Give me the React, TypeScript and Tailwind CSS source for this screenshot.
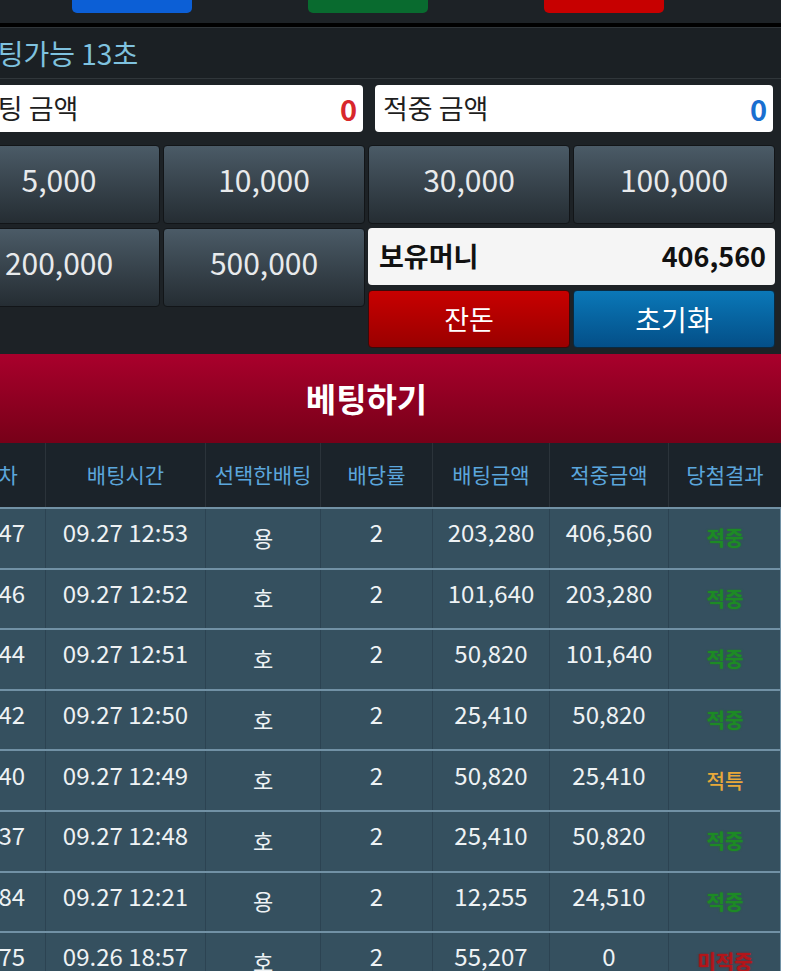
const font = { fontFamily: '"Noto Sans CJK KR", "Noto Sans", sans-serif' };

interface BetRow {
  round: string;
  time: string;
  pick: string;
  odds: string;
  bet: string;
  win: string;
  result: "win" | "tie" | "lose";
}

const rows: BetRow[] = [
  { round: "3847", time: "09.27 12:53", pick: "용", odds: "2", bet: "203,280", win: "406,560", result: "win" },
  { round: "3846", time: "09.27 12:52", pick: "호", odds: "2", bet: "101,640", win: "203,280", result: "win" },
  { round: "3844", time: "09.27 12:51", pick: "호", odds: "2", bet: "50,820", win: "101,640", result: "win" },
  { round: "3842", time: "09.27 12:50", pick: "호", odds: "2", bet: "25,410", win: "50,820", result: "win" },
  { round: "3840", time: "09.27 12:49", pick: "호", odds: "2", bet: "50,820", win: "25,410", result: "tie" },
  { round: "3837", time: "09.27 12:48", pick: "호", odds: "2", bet: "25,410", win: "50,820", result: "win" },
  { round: "3784", time: "09.27 12:21", pick: "용", odds: "2", bet: "12,255", win: "24,510", result: "win" },
  { round: "3675", time: "09.26 18:57", pick: "호", odds: "2", bet: "55,207", win: "0", result: "lose" },
];

const headers = ["회차", "배팅시간", "선택한배팅", "배당률", "배팅금액", "적중금액", "당첨결과"];

const cols = "grid grid-cols-[93px_160px_115px_112px_117px_119px_113px]";

function ResultText({ result }: { result: BetRow["result"] }) {
  if (result === "win")
    return <span className="text-[20px] font-bold text-[#1d8a25] [text-shadow:0_0_2px_#1d7a25]">적중</span>;
  if (result === "tie")
    return <span className="text-[20px] font-medium text-[#e8a83a]">적특</span>;
  return <span className="text-[20px] font-bold text-[#b3151a] [text-shadow:0_0_2px_#a01015]">미적중</span>;
}

function MoneyButton({ label }: { label: string }) {
  return (
    <button className="h-[79px] pb-[10px] rounded-[4px] border border-[#121518] bg-gradient-to-b from-[#4b5b67] to-[#252d33] text-[30px] text-[#e8eaec]">
      {label}
    </button>
  );
}

export default function App() {
  return (
    <div className="min-h-screen bg-white overflow-hidden" style={font}>
      <div className="w-[829px] ml-[-48px] bg-[#1d2226]">
        {/* top game buttons (cut off) */}
        <div className="h-[23px] flex items-start pl-[120px] gap-[116px]">
          <div className="w-[120px] h-[13px] rounded-b-[5px] bg-[#0c5fd6]" />
          <div className="w-[120px] h-[13px] rounded-b-[5px] bg-[#096b2f]" />
          <div className="w-[120px] h-[13px] rounded-b-[5px] bg-[#c70000]" />
        </div>
        <div className="h-[4px] bg-black" />

        {/* timer */}
        <div className="h-[52px] border-y border-[#30363a] bg-[#1b2024] flex items-center pl-[20px] text-[28px] text-[#7fc2df]">
          베팅가능 13초
        </div>

        {/* panel */}
        <div className="pt-[6px] pb-[6px]">
          <div className="grid grid-cols-2 gap-x-[12px] pl-[13px] pr-[8px]">
            <div className="h-[47px] rounded-[4px] bg-white flex items-center justify-between pl-[8px] pr-[6px]">
              <span className="text-[27px] text-[#1e1e1e]">베팅 금액</span>
              <span className="text-[29px] font-bold text-[#d8272c]">0</span>
            </div>
            <div className="h-[47px] rounded-[4px] bg-white flex items-center justify-between pl-[8px] pr-[6px]">
              <span className="text-[27px] text-[#1e1e1e]">적중 금액</span>
              <span className="text-[29px] font-bold text-[#1a6fd0]">0</span>
            </div>
          </div>

          <div className="mt-[13px] pl-[6px] grid grid-cols-[202px_202px_202px_202px] gap-x-[3px] gap-y-[4px] items-start">
            <MoneyButton label="5,000" />
            <MoneyButton label="10,000" />
            <MoneyButton label="30,000" />
            <MoneyButton label="100,000" />
            <MoneyButton label="200,000" />
            <MoneyButton label="500,000" />
            <div className="col-span-2 flex flex-col gap-[5px]">
              <div className="h-[57px] rounded-[4px] bg-[#f5f5f5] flex items-center justify-between pl-[11px] pr-[9px] text-[#111]">
                <span className="text-[27px] font-bold">보유머니</span>
                <span className="text-[27px] font-bold">406,560</span>
              </div>
              <div className="grid grid-cols-2 gap-x-[3px]">
                <button className="h-[58px] rounded-[4px] border border-[#3a0a0a] bg-gradient-to-b from-[#c80000] to-[#9a0000] text-[27px] text-white">
                  잔돈
                </button>
                <button className="h-[58px] rounded-[4px] border border-[#0a2a40] bg-gradient-to-b from-[#0b78b8] to-[#044f88] text-[28px] text-white">
                  초기화
                </button>
              </div>
            </div>
          </div>
        </div>

        {/* bet button */}
        <button className="w-full h-[89px] bg-gradient-to-b from-[#a9002c] to-[#770018] text-[33px] font-bold text-white">
          베팅하기
        </button>

        {/* history table */}
        <div className={`${cols} h-[64px] bg-[#1b232a]`}>
          {headers.map((h, i) => (
            <div
              key={h}
              className={`flex items-center justify-center text-[21px] text-[#5ba6dc] ${i > 0 ? "border-l border-[#2b333a]" : ""}`}
            >
              {h}
            </div>
          ))}
        </div>
        {rows.map((r) => (
          <div key={r.round} className={`${cols} h-[60.6px] border-t-2 border-r border-[#7191a5] bg-[#35505f] text-[24px] text-[#eef2f4]`}>
            <div className="flex items-center justify-center pb-[12px]">{r.round}</div>
            <div className="flex items-center justify-center pb-[12px] border-l border-[#2c4352]">{r.time}</div>
            <div className="flex items-center justify-center pb-[2px] border-l border-[#2c4352] text-[22px]">{r.pick}</div>
            <div className="flex items-center justify-center pb-[12px] border-l border-[#2c4352]">{r.odds}</div>
            <div className="flex items-center justify-center pb-[12px] border-l border-[#2c4352]">{r.bet}</div>
            <div className="flex items-center justify-center pb-[12px] border-l border-[#2c4352]">{r.win}</div>
            <div className="flex items-center justify-center border-l border-[#2c4352]">
              <ResultText result={r.result} />
            </div>
          </div>
        ))}
      </div>
    </div>
  );
}
